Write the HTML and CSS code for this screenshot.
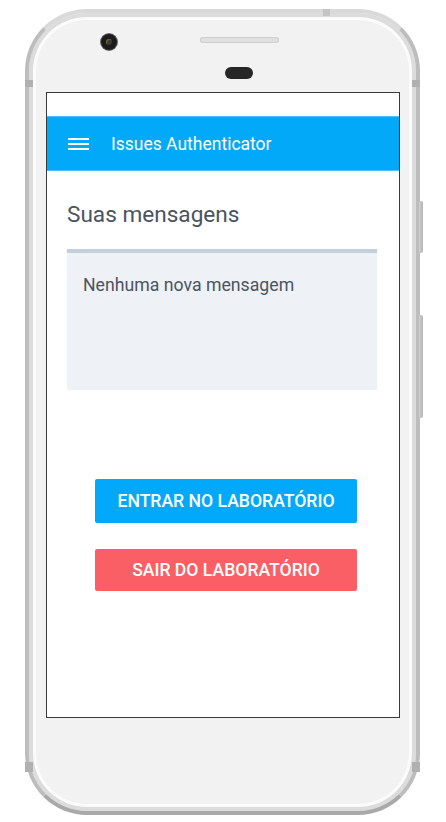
FILE: index.html
```html
<!DOCTYPE html>
<html lang="pt">
<head>
<meta charset="utf-8">
<title>Issues Authenticator</title>
<link rel="stylesheet" href="styles.css">
</head>
<body>
<div class="phone">
  <span class="band band-l1"></span>
  <span class="band band-r1"></span>
  <span class="band band-l2"></span>
  <span class="band band-r2"></span>
  <span class="band band-top"></span>
  <span class="side-btn side-btn-1"></span>
  <span class="side-btn side-btn-2"></span>
  <div class="phone-top">
    <span class="camera"><span class="lens"></span></span>
    <span class="speaker"></span>
    <span class="sensor"></span>
  </div>
  <div class="screen">
    <div class="statusbar"></div>
    <header class="toolbar">
      <svg class="menu-icon" width="21" height="13" viewBox="0 0 21 13" aria-hidden="true">
        <rect x="0" y="0" width="21" height="2" fill="#fff"/>
        <rect x="0" y="5" width="21" height="2" fill="#fff"/>
        <rect x="0" y="10" width="21" height="2" fill="#fff"/>
      </svg>
      <span class="toolbar-title">Issues Authenticator</span>
    </header>
    <main class="content">
      <h1 class="section-title">Suas mensagens</h1>
      <div class="messages">
        <p class="messages-empty">Nenhuma nova mensagem</p>
      </div>
      <div class="actions">
        <button class="btn btn-enter">ENTRAR NO LABORATÓRIO</button>
        <button class="btn btn-exit">SAIR DO LABORATÓRIO</button>
      </div>
    </main>
  </div>
</div>
</body>
</html>
```

FILE: styles.css
```css
* { box-sizing: border-box; }

html, body {
  margin: 0;
  padding: 0;
  background: #ffffff;
}

body {
  font-family: Roboto, "Liberation Sans", sans-serif;
}

.phone {
  position: relative;
  width: 395px;
  height: 806px;
  margin: 9px 0 0 25px;
  border: 4px solid #bdbdbd;
  border-top-color: #d9d9d9;
  border-bottom-color: #a9a9a9;
  border-radius: 62px;
  background: #f2f2f2;
  box-shadow: inset 0 0 0 4px #dcdcdc, inset 0 0 0 7px #fbfbfb;
  padding: 0 0 0 17px;
}

.band {
  position: absolute;
  background: #b0b0b0;
}
.band-l1 { left: -4px; top: 67px; width: 8px; height: 7px; }
.band-r1 { right: -4px; top: 67px; width: 8px; height: 7px; }
.band-l2 { left: -4px; top: 749px; width: 8px; height: 10px; }
.band-r2 { right: -4px; top: 749px; width: 8px; height: 10px; }
.band-top { left: 294px; top: -4px; width: 7px; height: 7px; background: #c4c4c4; }

.side-btn {
  position: absolute;
  right: -7px;
  width: 4px;
  border-radius: 0 2px 2px 0;
  background: linear-gradient(to right, #d0d0d0, #b4b4b4);
}
.side-btn-1 { top: 188px; height: 52px; }
.side-btn-2 { top: 302px; height: 103px; }

.phone-top {
  position: relative;
  height: 79px;
}

.camera {
  position: absolute;
  left: 55px;
  top: 21px;
  width: 16px;
  height: 16px;
  border-radius: 50%;
  background: #1c1c1c;
  box-shadow: 0 0 0 1px #6a6a6a;
  display: flex;
  align-items: center;
  justify-content: center;
}
.lens {
  width: 6px;
  height: 6px;
  border-radius: 50%;
  background: #3a3a3a;
  box-shadow: inset 1px 1px 0 #6b6b2a;
}

.speaker {
  position: absolute;
  left: 154px;
  top: 24px;
  width: 79px;
  height: 6px;
  border-radius: 3px;
  background: #e0e0e0;
  box-shadow: inset 0 0 0 1px #cfcfcf;
}

.sensor {
  position: absolute;
  left: 179px;
  top: 54px;
  width: 28px;
  height: 12px;
  border-radius: 6px;
  background: #262626;
}

.screen {
  width: 354px;
  height: 626px;
  border: 1px solid #3a3a3a;
  background: #ffffff;
  display: flex;
  flex-direction: column;
}

.statusbar {
  height: 23px;
  flex: none;
}

.toolbar {
  height: 55px;
  flex: none;
  background: #03a9f9;
  border-top: 1px solid #4cc0fa;
  border-bottom: 1px solid #4cc0fa;
  display: flex;
  align-items: center;
  padding-left: 21px;
}

.menu-icon {
  flex: none;
  margin-top: 1px;
}

.toolbar-title {
  margin-left: 22px;
  color: #ffffff;
  font-size: 17.5px;
  font-weight: 400;
}

.content {
  padding: 0 22px 0 20px;
}

.section-title {
  margin: 30px 0 20px;
  font-size: 22.6px;
  line-height: 28px;
  font-weight: 400;
  color: #4a5361;
}

.messages {
  height: 141px;
  background: #eef1f6;
  border-top: 4px solid #c3cfdc;
  padding: 21px 16px 0;
}

.messages-empty {
  margin: 0;
  font-size: 17.7px;
  line-height: 22px;
  color: #4a5462;
}

.actions {
  display: flex;
  flex-direction: column;
  gap: 26px;
  margin: 89px 0 0 28px;
}

.btn {
  width: 262px;
  border: none;
  border-radius: 2px;
  color: #ffffff;
  font-family: Roboto, "Liberation Sans", sans-serif;
  font-size: 17.6px;
  font-weight: 500;
  padding: 0;
  display: flex;
  align-items: center;
  justify-content: center;
}

.btn-enter {
  height: 44px;
  background: #02a9fb;
}

.btn-exit {
  height: 42px;
  background: #f95f64;
}
```
